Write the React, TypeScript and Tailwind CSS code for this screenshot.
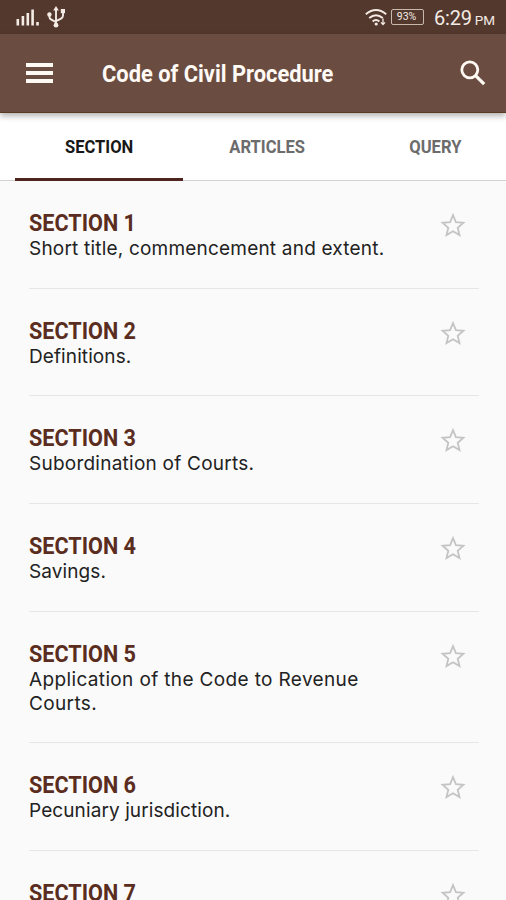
import clsx from "clsx";

const TABS = ["SECTION", "ARTICLES", "QUERY"];

const SECTIONS = [
  {
    title: "SECTION 1",
    lines: ["Short title, commencement and extent."],
    tracking: "tracking-[0.2px]",
  },
  { title: "SECTION 2", lines: ["Definitions."], tracking: "tracking-[0.1px]" },
  {
    title: "SECTION 3",
    lines: ["Subordination of Courts."],
    tracking: "tracking-[0.24px]",
  },
  { title: "SECTION 4", lines: ["Savings."], tracking: "tracking-[0.1px]" },
  {
    title: "SECTION 5",
    lines: ["Application of the Code to Revenue", "Courts."],
    tracking: "tracking-[0.36px]",
  },
  {
    title: "SECTION 6",
    lines: ["Pecuniary jurisdiction."],
    tracking: "tracking-[0.1px]",
  },
  { title: "SECTION 7", lines: [], tracking: "tracking-normal" },
];

function StatusBar() {
  return (
    <div className="flex h-[34px] shrink-0 items-center bg-[#53382e] text-[#f3ebe4]">
      {/* Signal bars */}
      <svg className="ml-4 h-5 w-[24px]" viewBox="0 0 24 20" fill="currentColor">
        <rect x="0.5" y="12" width="2.6" height="6.5" />
        <rect x="5.6" y="9" width="2.6" height="9.5" />
        <rect x="10.5" y="6" width="2.6" height="12.5" />
        <rect x="15.3" y="2.5" width="2.6" height="16" />
        <rect x="20.2" y="15" width="2.6" height="3.5" />
      </svg>
      {/* USB */}
      <svg
        className="ml-[7px] h-[22px] w-[19px]"
        viewBox="0 0 19 22"
        fill="none"
        stroke="currentColor"
        strokeWidth="1.9"
      >
        <path d="M9 4v15M9 16.2l-5-2.8q-1.6-1-1.6-3V9M9 15.2l5-2.6q2-1 2-3V5" />
        <path d="M9 0l2.8 4.4H6.2z" fill="currentColor" stroke="none" />
        <circle cx="9" cy="19.2" r="2.4" fill="currentColor" stroke="none" />
        <circle cx="2.4" cy="8.5" r="2.2" fill="currentColor" stroke="none" />
        <rect x="13.8" y="3" width="4.2" height="4.2" fill="currentColor" stroke="none" />
      </svg>

      {/* Wi-Fi */}
      <svg
        className="ml-auto h-[17px] w-[22px]"
        viewBox="0 0 22 17"
        fill="none"
        stroke="currentColor"
        strokeWidth="1.9"
      >
        <path d="M0.8 5.2Q11-3 21.2 5.2M4.2 9Q11 3.5 17.8 9M7.6 12.4Q11 9.8 14.4 12.4" />
        <circle cx="11.2" cy="15" r="1.6" fill="currentColor" stroke="none" />
        <path d="M18 9.5v6M16 13.4l2 2.2 2-2.2" strokeWidth="1.3" />
      </svg>
      <div className="ml-1 flex h-4 w-[33px] items-center justify-center rounded-[2px] border border-[#c9b8ad] pr-0.5 font-['Roboto',sans-serif] text-[10.5px] leading-none">
        93%
      </div>
      <div className="mt-[2px] ml-[10px] flex w-[61px] items-baseline font-['Roboto',sans-serif] leading-none">
        <span className="text-[20px] tracking-[-0.2px]">6:29</span>
        <span className="ml-[3px] text-[13.5px]">PM</span>
      </div>
      <span className="w-[11px]" />
    </div>
  );
}

function Toolbar() {
  return (
    <header className="relative z-10 flex h-[79px] shrink-0 items-center border-b border-[#5b3a20] bg-[#6b4c40] shadow-[0_3px_6px_rgba(0,0,0,0.3)]">
      <div className="ml-[26px] flex w-[27px] flex-col gap-[4px]">
        <span className="h-[4px] bg-[#fffaf4]" />
        <span className="h-[4px] bg-[#fffaf4]" />
        <span className="h-[4px] bg-[#fffaf4]" />
      </div>
      <h1 className="mt-[4px] ml-[49px] origin-left scale-x-[0.93] font-['Roboto',sans-serif] text-[23.5px] font-bold whitespace-nowrap text-[#fffaf5]">
        Code of Civil Procedure
      </h1>
      <svg
        className="mr-[20px] ml-auto h-[26px] w-[26px]"
        viewBox="0 0 26 26"
        fill="none"
        stroke="#fffaf4"
        strokeWidth="2.8"
      >
        <circle cx="9.8" cy="9.8" r="8" />
        <path d="M15.3 15.3l8.9 8.9" strokeWidth="3.3" />
      </svg>
    </header>
  );
}

function Tabs() {
  return (
    <nav className="flex h-[68px] shrink-0 border-b border-[#d2d2d2] bg-white pl-[15px]">
      {TABS.map((label, i) => (
        <div
          key={label}
          className={clsx(
            "flex h-[68px] w-[168px] shrink-0 items-center justify-center border-b-[3px] pt-[2px]",
            i === 0
              ? "border-[#4e241f] text-[#181818]"
              : "border-transparent text-[#6c6c6c]",
          )}
        >
          <span className="scale-x-[0.92] font-['Roboto',sans-serif] text-[18px] font-bold">
            {label}
          </span>
        </div>
      ))}
    </nav>
  );
}

type SectionRowProps = {
  title: string;
  lines: string[];
  tracking: string;
};

function SectionRow({ title, lines, tracking }: SectionRowProps) {
  return (
    <li className="mr-[27px] ml-[29px] flex shrink-0 justify-between border-b border-[#e6e6e6] pt-[29px] pb-[26.65px]">
      <div>
        <h2 className="h-[27px] origin-left scale-x-[0.94] font-['Roboto',sans-serif] text-[23px] leading-[27px] font-bold whitespace-nowrap text-[#5b2d20]">
          {title}
        </h2>
        <p
          className={clsx(
            "font-['Inter',sans-serif] text-[19px] leading-6 whitespace-nowrap text-[#222]",
            tracking,
          )}
        >
          {lines.map((line) => (
            <span key={line} className="block">
              {line}
            </span>
          ))}
        </p>
      </div>
      <svg
        className="mt-[2px] mr-[12px] h-[27px] w-[28px]"
        viewBox="0 0 28 27"
        fill="none"
        stroke="#c4c4c4"
        strokeWidth="1.8"
      >
        <path d="M14 3.2l2.9 7 7.5.6-5.7 4.9 1.8 7.4L14 19.2l-6.5 3.9 1.8-7.4-5.7-4.9 7.5-.6z" />
      </svg>
    </li>
  );
}

export default function App() {
  return (
    <div className="flex h-[900px] w-[506px] flex-col overflow-hidden bg-[#fafafa]">
      <StatusBar />
      <Toolbar />
      <Tabs />
      <ul className="flex flex-col">
        {SECTIONS.map((section) => (
          <SectionRow key={section.title} {...section} />
        ))}
      </ul>
    </div>
  );
}
